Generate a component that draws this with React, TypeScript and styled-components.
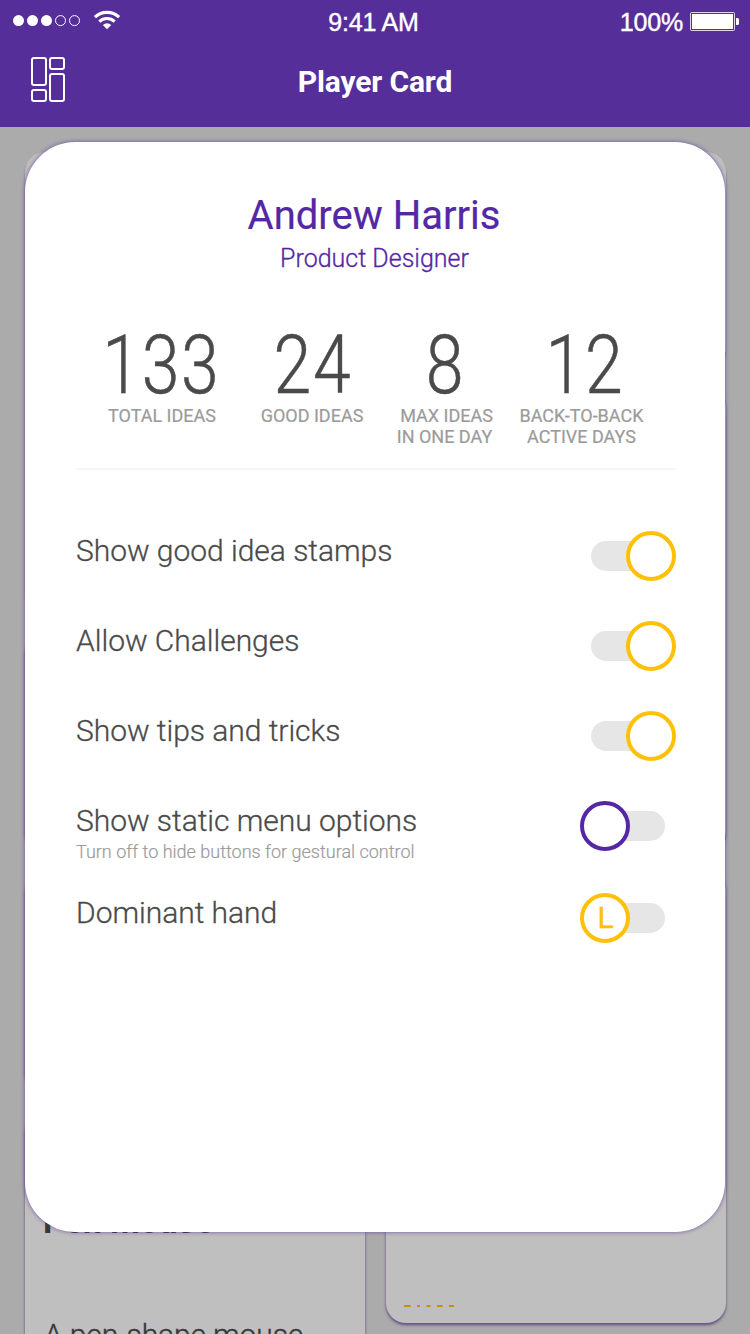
import React from "react";
import styled, { createGlobalStyle } from "styled-components";

const PURPLE = "#562e99";
const VIOLET = "#5427a5";
const AMBER = "#ffc107";

const GlobalStyle = createGlobalStyle`
  * { box-sizing: border-box; }
  html, body { margin: 0; padding: 0; overflow: hidden; }
  body { font-family: Roboto, "Liberation Sans", sans-serif; }
`;

const Screen = styled.div`
  position: relative;
  width: 750px;
  height: 1334px;
  display: flex;
  flex-direction: column;
  overflow: hidden;
  background: #ababab;
`;

const Header = styled.header`
  flex: none;
  height: 127px;
  background: ${PURPLE};
  color: #fff;
`;

const StatusBar = styled.div`
  display: grid;
  grid-template-columns: 1fr auto 1fr;
  align-items: center;
  height: 44px;
  padding: 0 11px 0 8px;
  font: 25px/44px "Liberation Sans", Arial, sans-serif;
  -webkit-text-stroke: 0.4px #fff;
`;

const Signal = styled.div`
  display: flex;
  align-items: flex-start;
  height: 44px;
  padding: 10px 0 0 4px;
`;

const Clock = styled.span`
  letter-spacing: -0.2px;
`;

const Power = styled.div`
  display: flex;
  align-items: center;
  justify-content: flex-end;
  gap: 7px;
  letter-spacing: -0.2px;
  svg { margin-top: -3px; }
`;

const TitleBar = styled.div`
  display: grid;
  grid-template-columns: 1fr auto 1fr;
  height: 83px;
  padding: 0 30px;
`;

const MenuButton = styled.button`
  width: 36px;
  height: 48px;
  margin-top: 12px;
  padding: 0;
  border: 0;
  background: none;
`;

const Title = styled.h1`
  margin: 0;
  font-size: 30px;
  line-height: 76px;
  font-weight: 700;
  letter-spacing: -0.15px;
`;

const Board = styled.main`
  flex: 1;
  min-height: 0;
  display: flex;
  gap: 21px;
  padding: 25px 24px 0 25px;
`;

const Column = styled.div`
  width: 340px;
  display: flex;
  flex-direction: column;
  gap: 20px;
`;

const IdeaCard = styled.article<{ $height: number }>`
  flex: none;
  height: ${(p) => p.$height}px;
  border-radius: 20px;
  background: #bfbfbf;
  box-shadow: 0 2px 3px rgba(64, 34, 115, 0.7);
  overflow: hidden;
  color: #373737;

  &:first-child {
    box-shadow: 0 2px 2px rgba(64, 34, 115, 0.4);
  }
`;

const IdeaTitle = styled.h2`
  margin: 0;
  padding: 87px 0 0 18px;
  font-size: 34px;
  line-height: 44px;
  font-weight: 700;
  letter-spacing: -0.1px;
`;

const IdeaText = styled.p`
  margin: 0;
  padding: 72px 0 0 19px;
  font-size: 30px;
  line-height: 40px;
  font-weight: 300;
  letter-spacing: -0.12px;
  white-space: nowrap;
  -webkit-text-stroke: 0.4px #373737;
`;

const Tag = styled.div`
  display: flex;
  align-items: flex-end;
  height: 100%;
  padding: 0 0 16px 18px;
`;

const Panel = styled.section`
  position: absolute;
  left: 25px;
  top: 142px;
  width: 700px;
  height: 1090px;
  padding: 49px 49px 0 51px;
  border-radius: 50px;
  background: #fff;
  box-shadow: 0 0 4px rgba(86, 46, 153, 0.75);
`;

const Profile = styled.div`
  display: flex;
  flex-direction: column;
  align-items: center;
  height: 137px;
  padding-right: 4px;
  color: ${VIOLET};
`;

const Name = styled.h2`
  margin: 0;
  font-size: 40px;
  line-height: 50px;
  font-weight: 400;
  -webkit-text-stroke: 0.2px ${VIOLET};
`;

const Role = styled.p`
  margin: 0;
  padding-left: 1px;
  font-size: 25px;
  line-height: 36px;
  font-weight: 300;
  -webkit-text-stroke: 0.3px ${VIOLET};
`;

const Stats = styled.div`
  display: grid;
  grid-template-columns: 172px 128px 137px 137px;
  height: 142px;
  border-bottom: 2px solid #f6f6f6;
`;

const Stat = styled.div`
  display: flex;
  flex-direction: column;
  align-items: center;
`;

const Figure = styled.span<{ $shift: number }>`
  height: 77px;
  font-size: 81px;
  line-height: 75px;
  font-weight: 300;
  letter-spacing: 2px;
  color: #4a4a4a;
  -webkit-text-stroke: 0.5px #4a4a4a;
  transform: translateX(${(p) => p.$shift}px) scaleX(0.84);
`;

const Caption = styled.span<{ $indent?: number }>`
  padding-left: ${(p) => p.$indent ?? 0}px;
  font-size: 18px;
  line-height: 21px;
  white-space: nowrap;
  color: #9b9b9b;
  -webkit-text-stroke: 0.2px #9b9b9b;
`;

const Settings = styled.ul`
  display: flex;
  flex-direction: column;
  margin: 0;
  padding: 61px 0 0;
  list-style: none;
`;

const Setting = styled.li<{ $tall?: boolean }>`
  display: flex;
  justify-content: space-between;
  height: ${(p) => (p.$tall ? 92 : 90)}px;
`;

const Label = styled.div`
  font-size: 30px;
  line-height: 39px;
  font-weight: 300;
  letter-spacing: -0.03px;
  color: #4a4a4a;
  -webkit-text-stroke: 0.3px currentColor;
`;

const Hint = styled.div`
  padding-top: 1px;
  font-size: 18px;
  line-height: 22px;
  letter-spacing: 0;
  color: #9b9b9b;
  -webkit-text-stroke: 0.2px currentColor;
`;

const Switch = styled.button<{ $on?: boolean }>`
  display: flex;
  align-items: center;
  width: 96px;
  height: 50px;
  padding: 0 ${(p) => (p.$on ? "15px 0 11px" : "11px 0 15px")};
  border: 0;
  background: none;
  position: relative;

  &::before {
    content: "";
    width: 70px;
    height: 30px;
    border-radius: 15px;
    background: #e6e6e6;
  }
`;

const Knob = styled.span<{ $on?: boolean; $color: string }>`
  position: absolute;
  top: 0;
  ${(p) => (p.$on ? "right: 0;" : "left: 0;")}
  width: 50px;
  height: 50px;
  padding-left: 1px;
  border: 4px solid ${(p) => p.$color};
  border-radius: 50%;
  background: #fff;
  color: ${(p) => p.$color};
  font: 30px/41px Roboto, sans-serif;
  -webkit-text-stroke: 0.4px currentColor;
  text-align: center;
`;

const stats = [
  { value: "133", lines: [["TOTAL IDEAS", 0]], shift: -1 },
  { value: "24", lines: [["GOOD IDEAS", 0]], shift: 1 },
  { value: "8", lines: [["MAX IDEAS", 4], ["IN ONE DAY", 0]], shift: 1 },
  { value: "12", lines: [["BACK-TO-BACK", 0], ["ACTIVE DAYS", 0]], shift: 3 },
] as { value: string; lines: [string, number][]; shift: number }[];

const settings = [
  { label: "Show good idea stamps", on: true, color: AMBER },
  { label: "Allow Challenges", on: true, color: AMBER },
  { label: "Show tips and tricks", on: true, color: AMBER },
  {
    label: "Show static menu options",
    hint: "Turn off to hide buttons for gestural control",
    on: false,
    color: VIOLET,
  },
  { label: "Dominant hand", on: false, color: AMBER, mark: "L" },
];

function SignalIcon() {
  return (
    <svg width="110" height="21" viewBox="12 10 110 21" fill="none" stroke="#fff">
      {[18.5, 32.5, 46.5].map((x) => (
        <circle key={x} cx={x} cy="20.6" r="5.5" fill="#fff" stroke="none" />
      ))}
      {[60.5, 74.5].map((x) => (
        <circle key={x} cx={x} cy="20.6" r="5" />
      ))}
      <path d="M94.9 17.2A17.6 17.6 0 0 1 119.1 17.2" strokeWidth="3.2" />
      <path d="M99.3 21.6A11.2 11.2 0 0 1 114.7 21.6" strokeWidth="3.1" />
      <path d="M102.8 25.1Q107 21.5 111.2 25.1L107 29.2Z" fill="#fff" stroke="none" />
    </svg>
  );
}

function BatteryIcon() {
  return (
    <svg width="49" height="20" viewBox="0 0 49 20">
      <rect x="0.5" y="1.5" width="44" height="18" rx="1" fill="none" stroke="#fff" strokeOpacity="0.8" />
      <rect x="2" y="3" width="41" height="15" fill="#fff" />
      <path d="M46 7h1.500q1.500 0 1.500 1.500v4q0 1.500-1.500 1.500H46z" fill="#fff" />
    </svg>
  );
}

function BoardIcon() {
  return (
    <svg width="36" height="48" viewBox="0 0 36 48" fill="none" stroke="#fff" strokeWidth="2">
      <rect x="2" y="2" width="14" height="27" rx="2" />
      <rect x="20" y="2" width="14" height="11" rx="2" />
      <rect x="2" y="34" width="14" height="11" rx="2" />
      <rect x="20" y="18" width="14" height="27" rx="2" />
    </svg>
  );
}

export default function App() {
  return (
    <>
      <GlobalStyle />
      <Screen>
        <Header>
          <StatusBar>
            <Signal>
              <SignalIcon />
            </Signal>
            <Clock>9:41 AM</Clock>
            <Power>
              100%
              <BatteryIcon />
            </Power>
          </StatusBar>
          <TitleBar>
            <MenuButton aria-label="Board">
              <BoardIcon />
            </MenuButton>
            <Title>Player Card</Title>
          </TitleBar>
        </Header>
        <Board>
          <Column>
            <IdeaCard $height={461} />
            <IdeaCard $height={219} />
            <IdeaCard $height={220} />
            <IdeaCard $height={300}>
              <IdeaTitle>Pen mouse</IdeaTitle>
              <IdeaText>A pen-shape mouse</IdeaText>
            </IdeaCard>
          </Column>
          <Column>
            <IdeaCard $height={216} />
            <IdeaCard $height={462} />
            <IdeaCard $height={453}>
              <Tag>
                <svg width="52" height="2" fill="#bf9105">
                  <rect x="0" width="6.500" height="2" />
                  <rect x="13" width="3" height="2" />
                  <rect x="22.500" width="4" height="2" />
                  <rect x="33" width="5.500" height="2" />
                  <rect x="45" width="5" height="2" />
                </svg>
              </Tag>
            </IdeaCard>
          </Column>
        </Board>
        <Panel>
          <Profile>
            <Name>Andrew Harris</Name>
            <Role>Product Designer</Role>
          </Profile>
          <Stats>
            {stats.map((s) => (
              <Stat key={s.value}>
                <Figure $shift={s.shift}>{s.value}</Figure>
                {s.lines.map(([text, indent]) => (
                  <Caption key={text} $indent={indent}>
                    {text}
                  </Caption>
                ))}
              </Stat>
            ))}
          </Stats>
          <Settings>
            {settings.map((s) => (
              <Setting key={s.label} $tall={!!s.hint}>
                <Label>
                  {s.label}
                  {s.hint && <Hint>{s.hint}</Hint>}
                </Label>
                <Switch $on={s.on} aria-label={s.label}>
                  <Knob $on={s.on} $color={s.color}>
                    {s.mark}
                  </Knob>
                </Switch>
              </Setting>
            ))}
          </Settings>
        </Panel>
      </Screen>
    </>
  );
}
